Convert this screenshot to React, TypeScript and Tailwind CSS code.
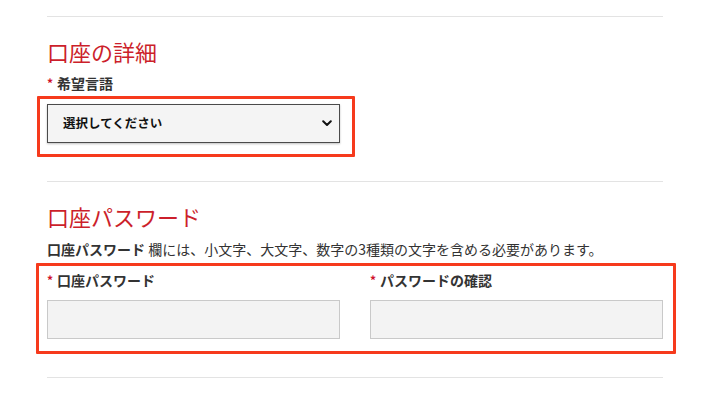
import React from "react";

const font = { fontFamily: '"Noto Sans CJK JP", "Noto Sans", sans-serif' };

function Label({ text }: { text: string }) {
  return (
    <div className="flex items-center h-[18px] text-[14px] font-bold text-[#333] leading-none">
      <span className="text-[#d0112b] mr-[4px] text-[12px]">*</span>
      <span>{text}</span>
    </div>
  );
}

export default function App() {
  return (
    <div className="w-[711px] h-[399px] bg-white overflow-hidden" style={font}>
      <div className="ml-[47px] w-[616px]">
        <div className="pt-[16px]">
          <div className="border-t border-[#e3e3e3]" />
        </div>
        <h2 className="mt-[21px] h-[26px] flex items-center text-[22px] text-[#cc1f2b] leading-none font-normal">
          口座の詳細
        </h2>
        <div className="mt-[10px]">
          <Label text="希望言語" />
        </div>
        <div className="relative mt-[12px] w-[293px]">
          <div className="absolute -left-[10px] -top-[8px] w-[318px] h-[61px] border-[3px] border-[#f63a1c] rounded-[1px]" />
          <div className="h-[39px] bg-[#f4f4f4] border border-[#4a4a4a] shadow-[0_1px_2px_rgba(0,0,0,0.25)] flex items-center justify-between pl-[15px] pr-[7px]">
            <span className="text-[12.5px] font-bold text-[#111]">選択してください</span>
            <svg width="10" height="7" viewBox="0 0 10 7" fill="none">
              <path d="M1.2 1.2 L5 5 L8.8 1.2" stroke="#111" strokeWidth="2" strokeLinecap="round" strokeLinejoin="round" />
            </svg>
          </div>
        </div>
        <div className="mt-[38px] border-t border-[#e3e3e3]" />
        <h2 className="mt-[21px] h-[26px] flex items-center text-[22px] text-[#cc1f2b] leading-none font-normal">
          口座パスワード
        </h2>
        <p className="mt-[11px] h-[18px] flex items-center text-[14px] text-[#333] leading-none whitespace-nowrap">
          <span className="font-bold">口座パスワード</span>
          <span>&nbsp;欄には、小文字、大文字、数字の3種類の文字を含める必要があります。</span>
        </p>
        <div className="relative mt-[13px]">
          <div className="absolute -left-[11px] -top-[8px] w-[640px] h-[91px] border-[3px] border-[#f63a1c] rounded-[1px]" />
          <div className="grid grid-cols-2 gap-x-[30px]">
            <div>
              <Label text="口座パスワード" />
              <div className="mt-[11px] h-[39px] bg-[#f3f3f3] border border-[#c9c9c9]" />
            </div>
            <div>
              <Label text="パスワードの確認" />
              <div className="mt-[11px] h-[39px] bg-[#f3f3f3] border border-[#c9c9c9]" />
            </div>
          </div>
        </div>
        <div className="mt-[38px] border-t border-[#e3e3e3]" />
      </div>
    </div>
  );
}
